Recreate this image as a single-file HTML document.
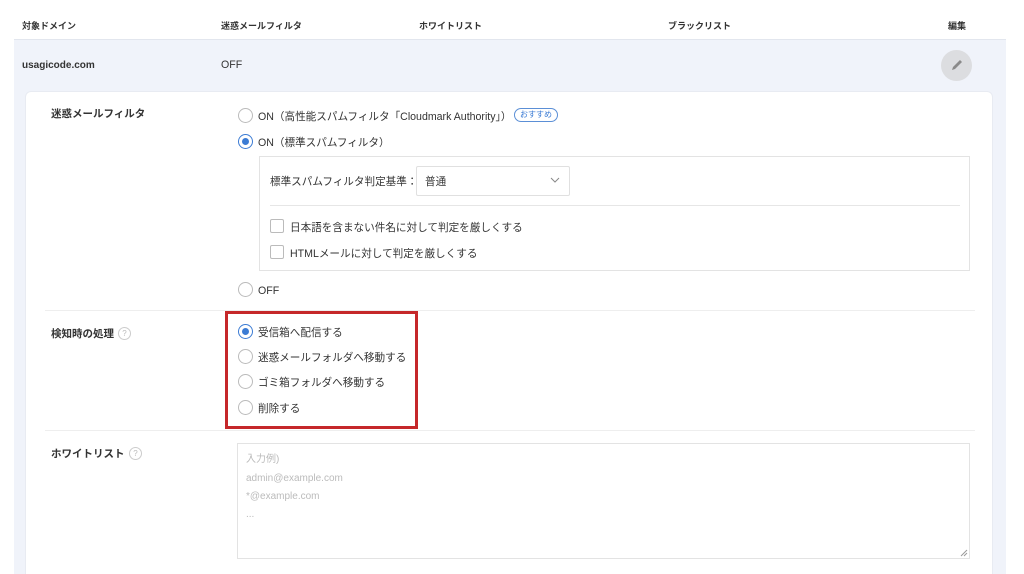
<!DOCTYPE html>
<html><head><meta charset="utf-8"><style>
*{margin:0;padding:0;box-sizing:border-box}
html,body{width:1024px;height:574px;overflow:hidden}
body{background:#fff;font-family:"Liberation Sans","Noto Sans CJK JP",sans-serif;color:#333;position:relative}
.a{position:absolute;white-space:nowrap;line-height:13px}
.h{font-size:9px;font-weight:bold;color:#333;top:20px}
.b{font-size:10.6px;color:#333;padding-top:2px}
.lbl{font-size:10.5px;font-weight:bold;color:#333;padding-top:2px}
.r{position:absolute;width:15px;height:15px;border:1px solid #bbb;border-radius:50%;background:#fff}
.r.on{border-color:#3b7bd4}
.r.on::after{content:"";position:absolute;left:3px;top:3px;width:7px;height:7px;border-radius:50%;background:#3b7bd4}
.cb{position:absolute;width:14px;height:14px;border:1px solid #bbb;border-radius:2px;background:#fff}
.q{position:absolute;width:13px;height:13px;border:1px solid #ccc;border-radius:50%;font-size:8px;color:#bbb;text-align:center;line-height:11px}
.ph{font-size:10px;color:#bbb;padding-top:1px}
</style></head><body>
<div class="a h" style="left:22px">対象ドメイン</div>
<div class="a h" style="left:221px">迷惑メールフィルタ</div>
<div class="a h" style="left:419px">ホワイトリスト</div>
<div class="a h" style="left:668px">ブラックリスト</div>
<div class="a h" style="left:948px">編集</div>
<div class="a" style="left:14px;top:39px;width:992px;height:540px;background:#f0f3fa;border-top:1px solid #e2e6ee"></div>
<div class="a" style="left:22px;top:59px;font-size:10px;font-weight:bold">usagicode.com</div>
<div class="a b" style="left:221px;top:57px">OFF</div>
<div class="a" style="left:941px;top:50px;width:31px;height:31px;border-radius:50%;background:#dcdde0">
<svg width="31" height="31" viewBox="0 0 31 31"><path d="M11 20l1-3 7-7 2 2-7 7z" fill="#8a8a8a"/></svg></div>
<div class="a" style="left:25px;top:91px;width:968px;height:500px;background:#fff;border-radius:6px;border:1px solid #e8ebf2"></div>

<div class="a lbl" style="left:51px;top:106px">迷惑メールフィルタ</div>
<div class="r" style="left:238px;top:108px"></div>
<div class="a b" style="left:258px;top:109px">ON（高性能スパムフィルタ「Cloudmark Authority」）</div>
<div class="a" style="left:514px;top:108px;border:1px solid #5b8fd6;border-radius:8px;font-size:8px;color:#3b7bd4;padding:1px 5px;height:14px;line-height:10px">おすすめ</div>
<div class="r on" style="left:238px;top:134px"></div>
<div class="a b" style="left:258px;top:135px">ON（標準スパムフィルタ）</div>
<div class="a" style="left:259px;top:156px;width:711px;height:115px;border:1px solid #e3e3e3"></div>
<div class="a b" style="left:270px;top:174px">標準スパムフィルタ判定基準：</div>
<div class="a" style="left:416px;top:166px;width:154px;height:30px;border:1px solid #e0e0e0;border-radius:2px"></div>
<div class="a b" style="left:425px;top:174px">普通</div>
<svg class="a" style="left:550px;top:177px" width="10" height="6"><path d="M1 1l4 4 4-4" fill="none" stroke="#888" stroke-width="1"/></svg>
<div class="a" style="left:270px;top:205px;width:690px;height:1px;background:#e6e6e6"></div>
<div class="cb" style="left:270px;top:219px"></div>
<div class="a b" style="left:290px;top:220px">日本語を含まない件名に対して判定を厳しくする</div>
<div class="cb" style="left:270px;top:245px"></div>
<div class="a b" style="left:290px;top:246px">HTMLメールに対して判定を厳しくする</div>
<div class="r" style="left:238px;top:282px"></div>
<div class="a b" style="left:258px;top:283px">OFF</div>

<div class="a" style="left:45px;top:310px;width:930px;height:1px;background:#eee"></div>
<div class="a lbl" style="left:51px;top:326px">検知時の処理</div>
<div class="q" style="left:118px;top:327px">?</div>
<div class="r on" style="left:238px;top:324px"></div>
<div class="a b" style="left:258px;top:325px">受信箱へ配信する</div>
<div class="r" style="left:238px;top:349px"></div>
<div class="a b" style="left:258px;top:350px">迷惑メールフォルダへ移動する</div>
<div class="r" style="left:238px;top:374px"></div>
<div class="a b" style="left:258px;top:375px">ゴミ箱フォルダへ移動する</div>
<div class="r" style="left:238px;top:400px"></div>
<div class="a b" style="left:258px;top:401px">削除する</div>
<div class="a" style="left:225px;top:311px;width:193px;height:118px;border:3px solid #c5282a"></div>

<div class="a" style="left:45px;top:430px;width:930px;height:1px;background:#eee"></div>
<div class="a lbl" style="left:51px;top:446px">ホワイトリスト</div>
<div class="q" style="left:129px;top:447px">?</div>
<div class="a" style="left:237px;top:443px;width:733px;height:116px;border:1px solid #e3e3e3"></div>
<div class="a ph" style="left:246px;top:452px">入力例)</div>
<div class="a ph" style="left:246px;top:471px">admin@example.com</div>
<div class="a ph" style="left:246px;top:489px">*@example.com</div>
<div class="a ph" style="left:246px;top:507px">...</div>
<svg class="a" style="left:960px;top:549px" width="8" height="8"><path d="M1 7L7 1M4 7L7 4" stroke="#999" stroke-width="1"/></svg>
</body></html>
